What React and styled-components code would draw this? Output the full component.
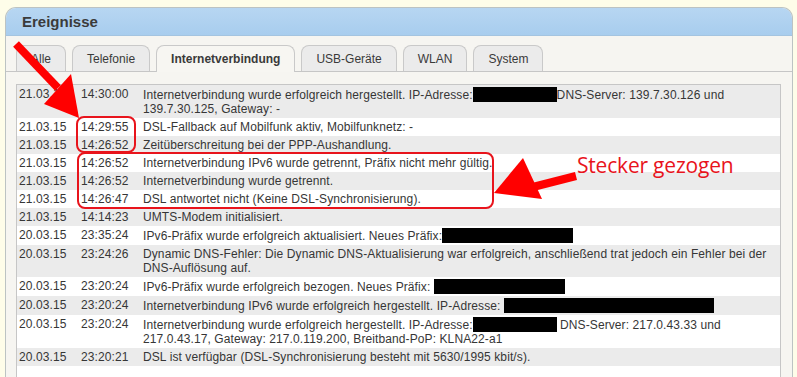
import React from 'react';
import styled, { createGlobalStyle } from 'styled-components';

const GlobalStyle = createGlobalStyle`
  html, body {
    margin: 0;
    padding: 0;
    background: #fefde9;
    overflow: hidden;
    font-family: 'Liberation Sans', Arial, sans-serif;
  }
`;

const tabs = ['Alle', 'Telefonie', 'Internetverbindung', 'USB-Geräte', 'WLAN', 'System'];

const Hidden = ({ w }) => <Redacted style={{ width: w }} />;

const events = [
  {
    date: '21.03.15',
    time: '14:30:00',
    msg: (
      <>
        Internetverbindung wurde erfolgreich hergestellt. IP-Adresse:<Hidden w={84} />DNS-Server: 139.7.30.126 und
        <br />
        139.7.30.125, Gateway: -
      </>
    ),
  },
  { date: '21.03.15', time: '14:29:55', msg: 'DSL-Fallback auf Mobilfunk aktiv, Mobilfunknetz: -' },
  { date: '21.03.15', time: '14:26:52', msg: 'Zeitüberschreitung bei der PPP-Aushandlung.' },
  { date: '21.03.15', time: '14:26:52', msg: 'Internetverbindung IPv6 wurde getrennt, Präfix nicht mehr gültig.' },
  { date: '21.03.15', time: '14:26:52', msg: 'Internetverbindung wurde getrennt.' },
  { date: '21.03.15', time: '14:26:47', msg: 'DSL antwortet nicht (Keine DSL-Synchronisierung).' },
  { date: '21.03.15', time: '14:14:23', msg: 'UMTS-Modem initialisiert.' },
  {
    date: '20.03.15',
    time: '23:35:24',
    msg: (
      <>
        IPv6-Präfix wurde erfolgreich aktualisiert. Neues Präfix:<Hidden w={131} />
      </>
    ),
  },
  {
    date: '20.03.15',
    time: '23:24:26',
    msg: (
      <>
        Dynamic DNS-Fehler: Die Dynamic DNS-Aktualisierung war erfolgreich, anschließend trat jedoch ein Fehler bei der
        <br />
        DNS-Auflösung auf.
      </>
    ),
  },
  {
    date: '20.03.15',
    time: '23:20:24',
    msg: (
      <>
        IPv6-Präfix wurde erfolgreich bezogen. Neues Präfix: <Hidden w={131} />
      </>
    ),
  },
  {
    date: '20.03.15',
    time: '23:20:24',
    msg: (
      <>
        Internetverbindung IPv6 wurde erfolgreich hergestellt. IP-Adresse: <Hidden w={210} />
      </>
    ),
  },
  {
    date: '20.03.15',
    time: '23:20:24',
    msg: (
      <>
        Internetverbindung wurde erfolgreich hergestellt. IP-Adresse:<Hidden w={84} /> DNS-Server: 217.0.43.33 und
        <br />
        217.0.43.17, Gateway: 217.0.119.200, Breitband-PoP: KLNA22-a1
      </>
    ),
  },
  { date: '20.03.15', time: '23:20:21', msg: 'DSL ist verfügbar (DSL-Synchronisierung besteht mit 5630/1995 kbit/s).' },
];

export default function App() {
  return (
    <>
      <GlobalStyle />
      <Page>
        <Panel>
          <Header>Ereignisse</Header>
          <Body>
            <TabStrip>
              {tabs.map((t) => (
                <Tab key={t} active={t === 'Internetverbindung'}>
                  {t}
                </Tab>
              ))}
            </TabStrip>
            <List>
              {events.map((e, i) => (
                <Row key={i}>
                  <Cell>{e.date}</Cell>
                  <Cell>{e.time}</Cell>
                  <Cell>{e.msg}</Cell>
                </Row>
              ))}
            </List>
          </Body>
        </Panel>

        <Annotations width="797" height="377" viewBox="0 0 797 377">
          <rect x="77" y="117" width="58" height="35" rx="7" fill="none" stroke="#e8141c" strokeWidth="2" />
          <rect x="78" y="153" width="415" height="55" rx="7" fill="none" stroke="#e8141c" strokeWidth="2" />
          <line x1="16" y1="44" x2="58" y2="88" stroke="#ff0000" strokeWidth="8" />
          <polygon points="44,104 71,74 79,118" fill="#ff0000" />
          <line x1="576" y1="176" x2="525" y2="189" stroke="#ff0000" strokeWidth="8" />
          <polygon points="523,158 542,199 494,193" fill="#ff0000" />
        </Annotations>
        <Callout>Stecker gezogen</Callout>
      </Page>
    </>
  );
}

const Page = styled.div`
  position: relative;
  width: 797px;
  height: 377px;
  padding: 7px 4px 0 5px;
  box-sizing: border-box;
`;

const Panel = styled.div`
  border: 1px solid #bcc3c3;
  border-bottom: none;
  border-radius: 11px 11px 0 0;
  overflow: hidden;
  height: 369px;
  background: #f6f5f1;
`;

const Header = styled.div`
  height: 27px;
  padding-left: 16px;
  display: flex;
  align-items: center;
  background: linear-gradient(#b7d6f2, #a8cdee);
  border-bottom: 1px solid #a4c4e0;
  color: #3b3b3b;
  font-size: 15px;
  font-weight: bold;
`;

const Body = styled.div`
  padding-top: 9px;
`;

const TabStrip = styled.div`
  display: flex;
  gap: 6px;
  padding-left: 10px;
  border-bottom: 1px solid #c6c6c6;
`;

const Tab = styled.div`
  padding: 0 14px;
  display: flex;
  align-items: center;
  border: 1px solid #c9c9c9;
  border-bottom: none;
  border-radius: 8px 8px 0 0;
  background: ${({ active }) => (active ? '#f7f6f2' : '#ebebeb')};
  color: #3a3a3a;
  font-size: 12px;
  font-weight: ${({ active }) => (active ? 'bold' : 'normal')};
  margin-bottom: ${({ active }) => (active ? '-1px' : '0')};
  height: ${({ active }) => (active ? '26px' : '25px')};
`;

const List = styled.div`
  margin: 12px 11px 0 10px;
  border: 1px solid #c6c6c6;
  border-bottom: none;
  background: #fff;
  height: 300px;
`;

const Row = styled.div`
  display: grid;
  grid-template-columns: 62px 62px 1fr;
  padding: 2px 0 2px 2px;
  line-height: 14px;
  font-size: 12px;
  letter-spacing: 0.1px;
  color: #363636;
  background: #fff;

  &:nth-child(odd) {
    background: #ebebeb;
  }
`;

const Cell = styled.div`
  white-space: nowrap;
`;

const Redacted = styled.span`
  display: inline-block;
  height: 15px;
  background: #000;
  vertical-align: -3px;
`;

const Annotations = styled.svg`
  position: absolute;
  top: 0;
  left: 0;
  pointer-events: none;
`;

const Callout = styled.span`
  position: absolute;
  left: 577px;
  top: 151px;
  color: #e8141c;
  font-family: 'Open Sans', sans-serif;
  font-size: 21px;
  letter-spacing: -0.2px;
`;
